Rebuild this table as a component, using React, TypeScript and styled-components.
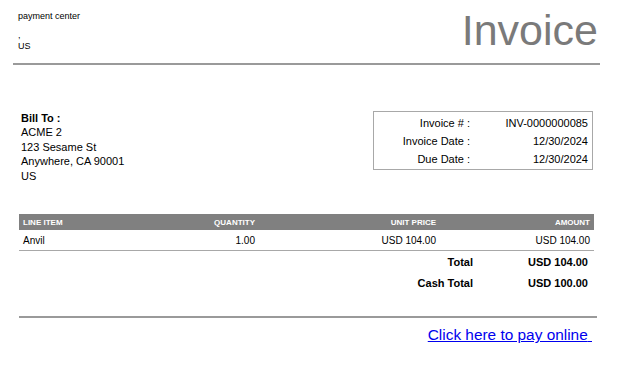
import React from "react";
import styled, { createGlobalStyle } from "styled-components";

const Global = createGlobalStyle`
  html, body { margin: 0; padding: 0; background: #fff; }
  body { font-family: "Liberation Sans", Arial, Helvetica, sans-serif; color: #000; }
`;

const Page = styled.div`
  width: 624px;
  height: 379px;
  overflow: hidden;
  background: #fff;
`;

const Header = styled.header`
  display: flex;
  justify-content: space-between;
  align-items: flex-start;
  margin: 0 24px 0 13px;
  padding: 9px 2px 11px 5px;
  border-bottom: 2px solid #9a9a9a;
`;

const Company = styled.div`
  font-size: 9px;
  line-height: 11px;
  margin-top: 1.5px;
`;

const CompanyName = styled.div`
  margin-bottom: 8px;
`;

const Title = styled.h1`
  margin: 0;
  font-size: 43px;
  line-height: 43px;
  font-weight: 400;
  color: #7a7a7a;
`;

const Section = styled.section`
  display: flex;
  justify-content: space-between;
  align-items: flex-start;
  margin: 45.75px 31px 0 21px;
`;

const BillTo = styled.div`
  font-size: 11px;
  line-height: 14.5px;
`;

const BillLabel = styled.div`
  font-weight: 700;
`;

const MetaBox = styled.div`
  width: 218px;
  border: 1px solid #a8a8a8;
  padding: 2px 0 1px;
  margin-top: 0.25px;
`;

const MetaRow = styled.div`
  display: grid;
  grid-template-columns: 96px 1fr;
  height: 18px;
  align-items: center;
  font-size: 11px;
`;

const MetaLabel = styled.span`
  text-align: right;
`;

const MetaValue = styled.span`
  text-align: right;
  padding-right: 4px;
`;

const Table = styled.div`
  margin: 31px 30px 0 19px;
`;

const Row = styled.div<{ $head?: boolean }>`
  display: grid;
  grid-template-columns: 120px 120px 181px 1fr;
  align-items: center;
  height: ${(p) => (p.$head ? "16px" : "20px")};
  background: ${(p) => (p.$head ? "#808080" : "transparent")};
  color: ${(p) => (p.$head ? "#fff" : "#000")};
  font-size: ${(p) => (p.$head ? "8px" : "10px")};
  font-weight: ${(p) => (p.$head ? 700 : 400)};
  border-bottom: ${(p) => (p.$head ? "none" : "1px solid #a8a8a8")};
`;

const Cell = styled.span<{ $right?: boolean }>`
  padding: 0 4px;
  text-align: ${(p) => (p.$right ? "right" : "left")};
`;

const Totals = styled.div`
  display: grid;
  grid-template-columns: auto 115px;
  justify-content: end;
  margin: 1px 36px 0 0;
  font-size: 11px;
  font-weight: 700;
`;

const TotalCell = styled.span`
  text-align: right;
  height: 21px;
  line-height: 21px;
`;

const Footer = styled.div`
  margin: 22px 27px 0 19px;
  border-top: 2px solid #9a9a9a;
  padding-top: 8px;
  display: flex;
  justify-content: flex-end;
  padding-right: 5px;
`;

const PayLink = styled.a`
  font-size: 15.4px;
  line-height: 18px;
  color: #0000ee;
  text-decoration: underline;
`;

export default function App() {
  return (
    <Page>
      <Global />
      <Header>
        <Company>
          <CompanyName>payment center</CompanyName>
          <div>,</div>
          <div>US</div>
        </Company>
        <Title>Invoice</Title>
      </Header>

      <Section>
        <BillTo>
          <BillLabel>Bill To :</BillLabel>
          <div>ACME 2</div>
          <div>123 Sesame St</div>
          <div>Anywhere, CA 90001</div>
          <div>US</div>
        </BillTo>
        <MetaBox>
          <MetaRow>
            <MetaLabel>Invoice # :</MetaLabel>
            <MetaValue>INV-0000000085</MetaValue>
          </MetaRow>
          <MetaRow>
            <MetaLabel>Invoice Date :</MetaLabel>
            <MetaValue>12/30/2024</MetaValue>
          </MetaRow>
          <MetaRow>
            <MetaLabel>Due Date :</MetaLabel>
            <MetaValue>12/30/2024</MetaValue>
          </MetaRow>
        </MetaBox>
      </Section>

      <Table>
        <Row $head>
          <Cell>LINE ITEM</Cell>
          <Cell $right>QUANTITY</Cell>
          <Cell $right>UNIT PRICE</Cell>
          <Cell $right>AMOUNT</Cell>
        </Row>
        <Row>
          <Cell>Anvil</Cell>
          <Cell $right>1.00</Cell>
          <Cell $right>USD 104.00</Cell>
          <Cell $right>USD 104.00</Cell>
        </Row>
      </Table>

      <Totals>
        <TotalCell>Total</TotalCell>
        <TotalCell>USD 104.00</TotalCell>
        <TotalCell>Cash Total</TotalCell>
        <TotalCell>USD 100.00</TotalCell>
      </Totals>

      <Footer>
        <PayLink href="#">Click here to pay online{"\u00a0"}</PayLink>
      </Footer>
    </Page>
  );
}
